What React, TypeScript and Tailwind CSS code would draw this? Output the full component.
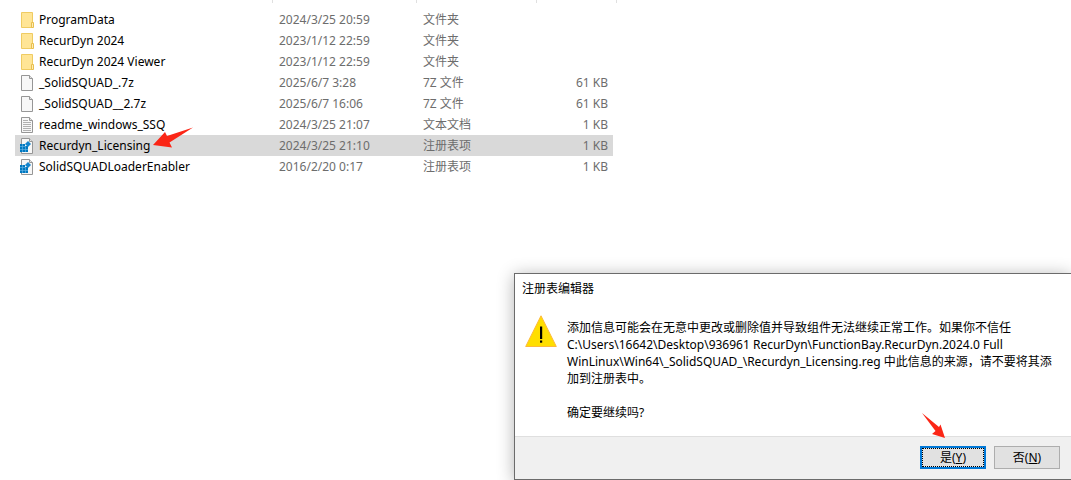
import React, { useState } from "react";

type FileKind = "folder" | "file" | "text" | "registry";

interface FileEntry {
  name: string;
  kind: FileKind;
  modified: string;
  type: string;
  size?: string;
}

const files: FileEntry[] = [
  { name: "ProgramData", kind: "folder", modified: "2024/3/25 20:59", type: "文件夹" },
  { name: "RecurDyn 2024", kind: "folder", modified: "2023/1/12 22:59", type: "文件夹" },
  { name: "RecurDyn 2024 Viewer", kind: "folder", modified: "2023/1/12 22:59", type: "文件夹" },
  { name: "_SolidSQUAD_.7z", kind: "file", modified: "2025/6/7 3:28", type: "7Z 文件", size: "61 KB" },
  { name: "_SolidSQUAD__2.7z", kind: "file", modified: "2025/6/7 16:06", type: "7Z 文件", size: "61 KB" },
  { name: "readme_windows_SSQ", kind: "text", modified: "2024/3/25 21:07", type: "文本文档", size: "1 KB" },
  { name: "Recurdyn_Licensing", kind: "registry", modified: "2024/3/25 21:10", type: "注册表项", size: "1 KB" },
  { name: "SolidSQUADLoaderEnabler", kind: "registry", modified: "2016/2/20 0:17", type: "注册表项", size: "1 KB" },
];

function FileIcon({ kind }: { kind: FileKind }) {
  if (kind === "folder") {
    return (
      <svg width="14" height="16" viewBox="0 0 14 16" aria-hidden="true">
        <path d="M1.5 0.5h11v15h-11z" fill="#ffe596" stroke="#efcb62" />
        <path d="M11.5 10.5h2v5h-2z" fill="#ffedb5" stroke="#e8bf4e" />
      </svg>
    );
  }

  return (
    <svg width="14" height="16" viewBox="0 0 14 16" aria-hidden="true">
      <path d="M1.5 0.5h8l3 3v12h-11z" fill="#f7f7f7" stroke="#969696" />
      <path d="M9.5 0.5v3h3" fill="#e4e4e4" stroke="#969696" />
      {kind === "text" && (
        <path
          d="M3 3.5h5M3 5.5h8M3 7.5h8M3 9.5h8M3 11.5h8M3 13.5h8"
          stroke="#b0b0b0"
        />
      )}
      {kind === "registry" && (
        <>
          <path d="M0 6h5v2h3v6h-8z" fill="#0078c0" />
          <path d="M8 3l3 3l-3 3l-3-3z" fill="#1584cc" />
          <path
            d="M2.5 6v8M5.5 8v6M0 8.500h5M0 11.500h8"
            stroke="#6fb9e6"
            strokeWidth="0.6"
          />
        </>
      )}
    </svg>
  );
}

function WarningIcon() {
  return (
    <svg width="32" height="32" viewBox="0 0 32 32" className="shrink-0" aria-hidden="true">
      <path d="M16 0.8L31.3 31.5H0.7z" fill="#ffde00" stroke="#fdb93a" strokeLinejoin="round" />
      <path d="M15 11.5h2.200v12.500h-2.200z" fill="#000" />
      <path d="M15 25.500h2.200v2.200h-2.200z" fill="#000" />
    </svg>
  );
}

function FileTable() {
  const [selected, setSelected] = useState("Recurdyn_Licensing");

  return (
    <div className="pl-[15px]">
      <div className="flex h-[3px] mb-1.5" aria-hidden="true">
        <span className="w-[258px] border-r border-[#e0e0e0]" />
        <span className="w-36 border-r border-[#e0e0e0]" />
        <span className="w-[120px] border-r border-[#e0e0e0]" />
        <span className="w-20 border-r border-[#e0e0e0]" />
      </div>
      <table className="w-[598px] table-fixed text-[#6d6d6d]">
        <colgroup>
          <col className="w-[258px]" />
          <col className="w-36" />
          <col className="w-[120px]" />
          <col />
        </colgroup>
        <tbody>
          {files.map((file) => (
            <tr
              key={file.name}
              onClick={() => setSelected(file.name)}
              className={file.name === selected ? "bg-[#d9d9d9]" : ""}
            >
              <td className="h-[21px] p-0 pl-[5px]">
                <div className="flex items-center gap-[5px] text-black">
                  <FileIcon kind={file.kind} />
                  <span className="relative">
                    {file.name}
                    {file.name === "Recurdyn_Licensing" && (
                      <svg
                        width="42"
                        height="22"
                        viewBox="0 0 42 22"
                        className="absolute left-full -top-2.5 ml-0.5"
                        aria-hidden="true"
                      >
                        <path d="M41 0.5L15 9L13 5L1 18L20 20.5L17.5 15.5z" fill="#fb2616" />
                      </svg>
                    )}
                  </span>
                </div>
              </td>
              <td className="p-0 pl-1.5">{file.modified}</td>
              <td className="p-0 pl-1.5">{file.type}</td>
              <td className="p-0 pr-[5px] text-right">{file.size}</td>
            </tr>
          ))}
        </tbody>
      </table>
    </div>
  );
}

function ConfirmDialog() {
  return (
    <div
      role="dialog"
      aria-labelledby="dialog-title"
      className="absolute right-0 bottom-0 w-[557px] max-w-full border border-r-0 border-[#6b6b6b] bg-white text-black shadow-[0_2px_16px_rgba(0,0,0,0.3)]"
    >
      <h1 id="dialog-title" className="pl-[7px] pt-1.5">
        注册表编辑器
      </h1>
      <div className="flex gap-2.5 pl-2.5 pt-[18px] pb-[15px]">
        <WarningIcon />
        <div className="pt-1 whitespace-nowrap">
          <p>
            添加信息可能会在无意中更改或删除值并导致组件无法继续正常工作。如果你不信任
            <br />
            C:\Users\16642\Desktop\936961 RecurDyn\FunctionBay.RecurDyn.2024.0 Full
            <br />
            WinLinux\Win64\_SolidSQUAD_\Recurdyn_Licensing.reg 中此信息的来源，请不要将其添
            <br />
            加到注册表中。
          </p>
          <p className="mt-[17px]">确定要继续吗?</p>
        </div>
      </div>
      <div className="flex justify-end gap-2 border-t border-[#dfdfdf] bg-[#f0f0f0] pt-[9px] pr-[11px] pb-2.5">
        <div className="relative">
          <button
            type="button"
            className="block h-[23px] w-[66px] border-2 border-[#0078d7] bg-[#e1e1e1] outline-1 -outline-offset-3 outline-dotted outline-black"
          >
            是(<u>Y</u>)
          </button>
          <svg
            width="26"
            height="28"
            viewBox="0 0 26 28"
            className="absolute left-0 bottom-full mb-1.5"
            aria-hidden="true"
          >
            <path d="M2 1L19 15L20.500 12.500L25 26L12 22L15.500 19z" fill="#fb2616" />
          </svg>
        </div>
        <button type="button" className="h-[23px] w-[66px] border border-[#adadad] bg-[#e1e1e1]">
          否(<u>N</u>)
        </button>
      </div>
    </div>
  );
}

export default function App() {
  return (
    <main className="relative min-h-screen overflow-hidden bg-white font-['Noto_Sans','Noto_Sans_CJK_SC',sans-serif] text-[12px] leading-[17px]">
      <FileTable />
      <ConfirmDialog />
    </main>
  );
}
